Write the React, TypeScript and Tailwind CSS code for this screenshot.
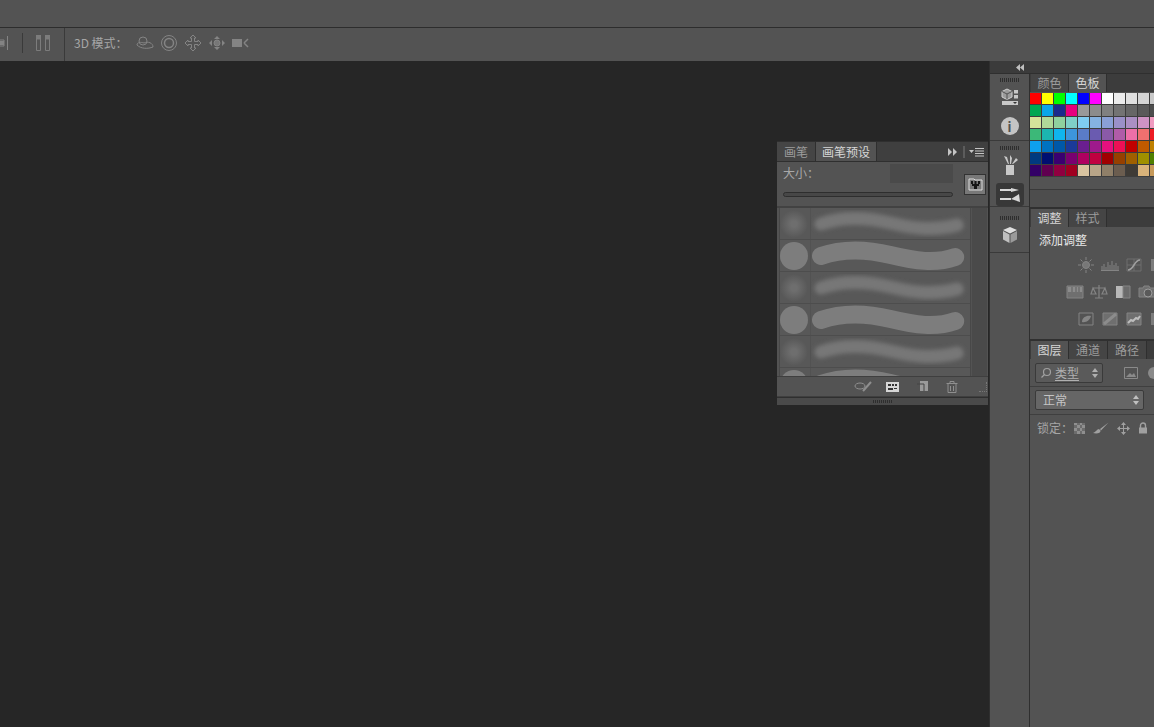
import React from 'react';

const swatchRows = [
  ['#ff0000', '#ffff00', '#00ff00', '#00ffff', '#0000ff', '#ff00ff', '#ffffff', '#ececec', '#e0e0e0', '#d4d4d4', '#c8c8c8'],
  ['#00a651', '#0aa5e8', '#1b2a8c', '#e6007e', '#999999', '#8c8c8c', '#808080', '#737373', '#666666', '#595959', '#4d4d4d'],
  ['#d6e39a', '#b1d998', '#8fd19e', '#7fcfc8', '#7fcdf2', '#85b3e2', '#8aa0d6', '#9a90c8', '#ab8fc4', '#cf93c4', '#f09bc0'],
  ['#3cb878', '#1cb5b0', '#10b5ee', '#3d95dc', '#5a7cc8', '#6a5bb0', '#8a5aa8', '#b05ca8', '#ee6fa8', '#f0706f', '#ed1c24'],
  ['#0ea0ee', '#0072c0', '#0058a8', '#1b3a9a', '#6a1f90', '#9e1a8c', '#e6107e', '#ed1055', '#c00000', '#c05a00', '#c08000'],
  ['#003a80', '#000f70', '#3a0070', '#7a0070', '#b00060', '#c00040', '#a00000', '#964000', '#a06000', '#a09000', '#508000'],
  ['#330066', '#600050', '#900040', '#a00020', '#d9c4a0', '#b8a588', '#8f7f68', '#6b5d4f', '#3f3b36', '#d9b37a', '#c79a5a'],
];

const Gripper: React.FC<{ className?: string }> = ({ className }) => (
  <div className={`flex gap-px ${className ?? ''}`}>
    {Array.from({ length: 10 }).map((_, i) => (
      <div key={i} className="h-[4px] w-px bg-[#2e2e2e]" />
    ))}
  </div>
);

const Icon: React.FC<{ w?: number; h?: number; children: React.ReactNode }> = ({ w = 18, h = 18, children }) => (
  <svg width={w} height={h} viewBox={`0 0 ${w} ${h}`} fill="none" stroke="#848484" strokeWidth="1" className="shrink-0">
    {children}
  </svg>
);

const Tab: React.FC<{ label: string; active?: boolean; w: number }> = ({ label, active, w }) => (
  <div
    style={{ width: w }}
    className={`flex h-full items-center justify-center border-r border-[#2f2f2f] text-[12px] ${
      active ? 'bg-[#535353] text-[#d6d6d6]' : 'bg-[#454545] text-[#9c9c9c]'
    }`}
  >
    {label}
  </div>
);

const SoftBrush = () => (
  <div className="flex h-[32px] border-b border-[#4d4d4d]">
    <div className="flex w-[31px] items-center border-r border-[#525252]">
      <div className="h-[28px] w-[28px] rounded-full bg-[radial-gradient(circle,#6e6e6e_15%,#585858_70%)]" />
    </div>
    <svg width="160" height="31" viewBox="0 0 160 31" fill="none">
      <defs>
        <filter id="soft" x="-10%" y="-80%" width="120%" height="260%">
          <feGaussianBlur stdDeviation="2.2" />
        </filter>
      </defs>
      <path d="M10 16 C 30 9, 55 9, 80 15 S 125 23, 147 17" stroke="#777777" strokeWidth="13" strokeLinecap="round" filter="url(#soft)" />
    </svg>
  </div>
);

const HardBrush = () => (
  <div className="flex h-[32px] border-b border-[#4d4d4d]">
    <div className="flex w-[31px] items-center border-r border-[#525252]">
      <div className="h-[28px] w-[28px] rounded-full bg-[#7d7d7d]" />
    </div>
    <svg width="160" height="31" viewBox="0 0 160 31" fill="none">
      <path d="M10 16 C 30 9, 55 9, 80 15 S 125 24, 145 17" stroke="#7d7d7d" strokeWidth="18" strokeLinecap="round" />
    </svg>
  </div>
);

const BrushPanel = () => (
  <div className="absolute left-[777px] top-[80px] flex h-[264px] w-[211px] flex-col overflow-hidden bg-[#535353]">
    <div className="flex h-[21px] shrink-0 items-end border-y border-[#2f2f2f] bg-[#3f3f3f]">
      <Tab label="画笔" w={39} />
      <Tab label="画笔预设" active w={61} />
      <div className="ml-auto flex items-center gap-[4px] pb-[3px] pr-[3px]">
        <svg width="12" height="10" viewBox="0 0 12 10" fill="#c4c4c4">
          <path d="M1 1 L5 5 L1 9 Z M6 1 L10 5 L6 9 Z" />
        </svg>
        <div className="h-[12px] w-[2px] border-x border-[#5c5c5c]" />
        <svg width="16" height="10" viewBox="0 0 16 10" fill="#c4c4c4">
          <path d="M0 3 H5 L2.5 6 Z M6 1 H15 V2 H6 Z M6 3.5 H15 V4.5 H6 Z M6 6 H15 V7 H6 Z M6 8.5 H15 V9.5 H6 Z" />
        </svg>
      </div>
    </div>
    <div className="flex h-[46px] shrink-0 border-b-2 border-[#424242] pl-[6px] pr-[2px]">
      <div className="flex-1 pr-[11px]">
        <div className="flex h-[22px] items-center justify-between">
          <span className="text-[12px] text-[#a8a8a8]">大小：</span>
          <div className="h-[19px] w-[63px] bg-[#4a4a4a]" />
        </div>
        <div className="mt-[8px] h-[5px] rounded-full border border-[#2e2e2e] bg-[#474747]" />
      </div>
      <div className="mt-[12px] flex h-[21px] w-[22px] items-center justify-center border border-[#333333] bg-[#787878]">
        <svg width="15" height="13" viewBox="0 0 15 13">
          <path d="M1 1 H6 L7 2 H14 V12 H1 Z" fill="none" stroke="#dcdcdc" />
          <path d="M3 3 H5 V6 H3 Z M10 3 H12 V6 H10 Z M6.5 3 H8.5 V6 H6.5 Z M4 6 H11 V8 H4 Z M6 8 H9 V11 H6 Z" fill="#151515" />
        </svg>
      </div>
    </div>
    <div className="flex h-[168px] shrink-0 overflow-hidden">
      <div className="ml-[2px] w-[192px] overflow-hidden border-x border-[#484848] bg-[#585858]">
        <SoftBrush />
        <HardBrush />
        <SoftBrush />
        <HardBrush />
        <SoftBrush />
        <HardBrush />
      </div>
      <div className="ml-[1px] w-[15px] bg-[#4a4a4a]" />
    </div>
    <div className="flex h-[21px] shrink-0 items-center justify-end border-y border-[#3f3f3f] bg-[#535353] pr-[1px]">
      <svg width="19" height="12" viewBox="0 0 19 12" fill="none" stroke="#8f8f8f" className="mr-[13px]">
        <ellipse cx="6" cy="5" rx="5" ry="3" />
        <path d="M9 10 L17 1" strokeWidth="2" />
      </svg>
      <svg width="13" height="10" viewBox="0 0 13 10" className="mr-[18px]">
        <path d="M0 0 H13 V10 H0 Z" fill="#d6d6d6" />
        <path d="M2 2 H5 V4 H2 Z M6 2 H8 V4 H6 Z M9 2 H11 V4 H9 Z M2 6 H7 V8 H2 Z M8 6 H11 V7 H8 Z" fill="#333333" />
      </svg>
      <svg width="11" height="11" viewBox="0 0 11 11" className="mr-[18px]">
        <path d="M3 0 H11 V10 H3 Z" fill="#9a9a9a" />
        <path d="M0 3 H7 V10" fill="none" stroke="#444444" />
      </svg>
      <svg width="12" height="12" viewBox="0 0 12 12" fill="none" stroke="#8f8f8f" className="mr-[21px]">
        <path d="M0.5 2.5 H11.5 M4 2 V0.5 H8 V2 M2 3 V11.5 H10 V3 M4.5 5 V10 M7.5 5 V10" />
      </svg>
      <div className="h-[10px] w-[8px] border-b border-r border-dotted border-[#777777]" />
    </div>
    <div className="flex h-[8px] shrink-0 items-center justify-center border-t border-[#2f2f2f] bg-[#4a4a4a]">
      <Gripper className="[&>div]:h-[3px]" />
    </div>
  </div>
);

const Adjust = {
  sun: (
    <Icon>
      <circle cx="9" cy="9" r="3.5" fill="#777777" />
      <path d="M9 1 V4 M9 14 V17 M1 9 H4 M14 9 H17 M3.5 3.5 L5.5 5.5 M12.5 12.5 L14.5 14.5 M3.5 14.5 L5.5 12.5 M12.5 5.5 L14.5 3.5" />
    </Icon>
  ),
  levels: (
    <Icon>
      <path d="M1 14 V10 M3 14 V8 M5 14 V11 M7 14 V6 M9 14 V9 M11 14 V5 M13 14 V9 M15 14 V7 M17 14 V10 M0 14.5 H18" />
    </Icon>
  ),
  curves: (
    <Icon>
      <path d="M2 3 H16 V15 H2 Z M2 9 H16 M9 3 V15" stroke="#6f6f6f" />
      <path d="M3 14 C 9 14, 9 4, 15 4" strokeWidth="1.5" stroke="#a0a0a0" />
    </Icon>
  ),
  exposure: (
    <Icon>
      <path d="M2 3 H16 V15 H2 Z" fill="#7c7c7c" stroke="none" />
    </Icon>
  ),
  hue: (
    <Icon>
      <path d="M1 3 H17 V15 H1 Z" fill="#6f6f6f" />
      <path d="M2 4 H16 V9 H2 Z" fill="#8c8c8c" stroke="none" />
      <path d="M6 4 V9 M10 4 V9 M13 4 V9" stroke="#5e5e5e" />
    </Icon>
  ),
  scale: (
    <Icon>
      <path d="M9 2 V15 M5 15 H13 M3 5 H15 M3 5 L1 11 H6 Z M15 5 L12 11 H17 Z" strokeWidth="1.2" />
    </Icon>
  ),
  bw: (
    <Icon>
      <path d="M2 3 H9 V15 H2 Z" fill="#b8b8b8" stroke="none" />
      <path d="M9 3 H16 V15 H9 Z" fill="#6b6b6b" />
    </Icon>
  ),
  camera: (
    <Icon>
      <path d="M1 5 H5 L6 3 H11 L12 5 H17 V14 H1 Z" fill="#6f6f6f" />
      <circle cx="10" cy="10" r="4" fill="#5a5a5a" stroke="#9c9c9c" />
    </Icon>
  ),
  invert: (
    <Icon>
      <path d="M2 3 H16 V15 H2 Z" />
      <path d="M5 12 C 5 7, 10 5, 14 6 C 13 10, 9 13, 5 12 Z" fill="#858585" stroke="none" />
    </Icon>
  ),
  poster: (
    <Icon>
      <path d="M2 3 H16 V15 H2 Z" fill="#6f6f6f" />
      <path d="M3 14 L15 4" stroke="#8c8c8c" strokeWidth="3" />
    </Icon>
  ),
  threshold: (
    <Icon>
      <path d="M2 3 H16 V15 H2 Z" fill="#6f6f6f" />
      <path d="M3 13 L6 10 L8 11 L11 8 L13 9 L15 6" stroke="#bdbdbd" strokeWidth="2" />
    </Icon>
  ),
};

const IconRow: React.FC<{ className?: string; children: React.ReactNode }> = ({ className, children }) => (
  <div className={`flex items-center gap-[6px] ${className ?? ''}`}>{children}</div>
);

export default function App() {
  return (
    <div
      className="flex h-[727px] w-[1154px] flex-col overflow-hidden bg-[#262626]"
      style={{ fontFamily: '"Noto Sans CJK SC", "Liberation Sans", sans-serif' }}
    >
      <div className="h-[28px] shrink-0 border-b border-[#2d2d2d] bg-[#535353]" />

      <div className="flex h-[33px] shrink-0 items-center bg-[#535353] pb-[3px] text-[#a6a6a6]">
        <svg width="10" height="18" viewBox="0 0 10 18" fill="none" stroke="#848484" className="shrink-0">
          <path d="M7.5 2 V16 M0 6 H4 V12 H0" />
          <path d="M0 7 H4 V11 H0 Z" fill="#848484" stroke="none" />
        </svg>
        <div className="ml-[12px] h-[20px] w-px bg-[#3a3a3a]" />
        <svg width="16" height="18" viewBox="0 0 16 18" fill="none" stroke="#7c7c7c" className="ml-[12px] shrink-0">
          <path d="M1 1 H6 V5 H1 Z M10 1 H15 V5 H10 Z" fill="#7c7c7c" stroke="none" />
          <path d="M1.5 5 H5.5 V16.5 H1.5 Z M10.5 5 H14.5 V16.5 H10.5 Z" />
        </svg>
        <div className="ml-[13px] -mb-[3px] h-[33px] w-px bg-[#3a3a3a]" />
        <span className="ml-[9px] w-[62px] text-[12px] leading-none">3D 模式：</span>
        <div className="flex gap-[6px]">
          <Icon>
            <circle cx="7" cy="7" r="4" />
            <path d="M1 11 C 1 8, 5 8, 8 9 C 12 7, 17 9, 17 13 C 12 15, 5 15, 1 11 Z" />
          </Icon>
          <Icon>
            <circle cx="9" cy="9" r="7.5" />
            <circle cx="9" cy="9" r="4.5" strokeWidth="1.5" />
          </Icon>
          <Icon>
            <path d="M9 1 L12 4 H10.5 V7.5 H14 V6 L17 9 L14 12 V10.5 H10.5 V14 H12 L9 17 L6 14 H7.5 V10.5 H4 V12 L1 9 L4 6 V7.5 H7.5 V4 H6 Z" />
          </Icon>
          <Icon>
            <path d="M9 2 L12 5 H6 Z M9 16 L12 13 H6 Z M1 9 L4 6 V12 Z M17 9 L14 6 V12 Z" fill="#848484" stroke="none" />
            <circle cx="9" cy="9" r="3" fill="#777777" />
          </Icon>
          <Icon>
            <path d="M0 5 H10 V13 H0 Z" fill="#848484" stroke="none" />
            <path d="M12 9 L16 5 M12 9 L16 13" strokeWidth="1.5" />
          </Icon>
        </div>
      </div>

      <div className="relative flex min-h-0 flex-1">
        <div className="flex-1" />
        <BrushPanel />

        <div className="flex w-[165px] shrink-0 flex-col border-l border-[#2f2f2f] bg-[#535353]">
          <div className="flex h-[13px] shrink-0 items-center justify-end border-b border-[#2f2f2f] bg-[#3b3b3b] pr-[130px]">
            <svg width="8" height="7" viewBox="0 0 8 7" fill="#c0c0c0">
              <path d="M4 0 V7 L0 3.5 Z M8 0 V7 L4 3.5 Z" />
            </svg>
          </div>

          <div className="flex min-h-0 flex-1">
            <div className="w-[40px] shrink-0 border-r border-[#2f2f2f]">
              <div className="flex h-[67px] flex-col items-center border-b border-[#3a3a3a] pt-[4px]">
                <Gripper />
                <svg width="18" height="18" viewBox="0 0 18 18" className="mt-[6px]">
                  <path d="M6 1 L11 3.5 V9 L6 11.5 L1 9 V3.5 Z" fill="#9c9c9c" stroke="#d0d0d0" />
                  <path d="M1 3.5 L6 6 L11 3.5 M6 6 V11.5" fill="none" stroke="#535353" />
                  <path d="M13 2 H17 V5.5 H13 Z M13 7 H17 V10.5 H13 Z M1 13 H17 V17 H1 Z" fill="#c8c8c8" />
                  <path d="M12 14 H16 L14 16 Z" fill="#333333" />
                </svg>
                <div className="mt-[11px] flex h-[18px] w-[18px] items-center justify-center rounded-full bg-[#c4c4c4] text-[13px] font-bold leading-none text-[#535353]">
                  i
                </div>
              </div>
              <div className="flex h-[66px] flex-col items-center border-b border-[#3a3a3a] pt-[5px]">
                <Gripper />
                <svg width="18" height="20" viewBox="0 0 18 20" fill="#c8c8c8" className="mt-[5px]">
                  <path d="M5 10 H13 V20 H5 Z M7 9 L3 1 L6 2 L8 9 Z M9 9 V0 L11 3 L10 9 Z M11 9 L15 3 L17 5 L12 9 Z" />
                </svg>
                <div className="mt-[8px] flex h-[23px] w-[28px] items-center justify-center rounded-[3px] bg-[#383838]">
                  <svg width="22" height="16" viewBox="0 0 22 16" fill="#d8d8d8">
                    <path d="M1 2 H12 V4 H1 Z M12 1 L20 3 L12 5 Z M1 11 H12 V13 H1 Z M12 12 L20 7 L21 15 Z" />
                  </svg>
                </div>
              </div>
              <div className="flex h-[46px] flex-col items-center border-b border-[#3a3a3a] pt-[9px]">
                <Gripper />
                <svg width="18" height="18" viewBox="0 0 18 18" className="mt-[6px]">
                  <path d="M9 1 L16 4 L9 7.5 L2 4 Z" fill="#e0e0e0" />
                  <path d="M2 5 L8.5 8.5 V17 L2 13.5 Z" fill="#c0c0c0" />
                  <path d="M16 5 L9.5 8.5 V17 L16 13.5 Z" fill="#9a9a9a" />
                </svg>
              </div>
            </div>

            <div className="min-w-0 flex-1 overflow-hidden">
              <div className="flex h-[18px] items-end bg-[#3c3c3c] pl-px">
                <Tab label="颜色" w={38} />
                <Tab label="色板" active w={38} />
              </div>
              <div className="h-[98px] border-b border-[#3a3a3a]">
                <div className="flex w-[132px] flex-col pt-px">
                  {swatchRows.map((row, r) => (
                    <div key={r} className="flex">
                      {row.map((c, i) => (
                        <div key={i} style={{ backgroundColor: c }} className="h-[12px] w-[12px] shrink-0 border-b border-r border-[#3d3d3d]" />
                      ))}
                    </div>
                  ))}
                </div>
              </div>
              <div className="h-[19px] border-b-2 border-[#303030] bg-[#4d4d4d]" />

              <div className="flex h-[18px] items-end bg-[#3c3c3c] pl-px">
                <Tab label="调整" active w={38} />
                <Tab label="样式" w={38} />
              </div>
              <div className="h-[114px] border-b-2 border-[#303030]">
                <div className="pl-[9px] pt-[3px] text-[12px] leading-[20px] text-[#e8e8e8]">添加调整</div>
                <IconRow className="ml-[47px] mt-[6px]">
                  {Adjust.sun}
                  {Adjust.levels}
                  {Adjust.curves}
                  {Adjust.exposure}
                </IconRow>
                <IconRow className="ml-[36px] mt-[9px]">
                  {Adjust.hue}
                  {Adjust.scale}
                  {Adjust.bw}
                  {Adjust.camera}
                </IconRow>
                <IconRow className="ml-[47px] mt-[9px]">
                  {Adjust.invert}
                  {Adjust.poster}
                  {Adjust.threshold}
                  {Adjust.exposure}
                </IconRow>
              </div>

              <div className="flex h-[18px] items-end bg-[#3c3c3c] pl-px">
                <Tab label="图层" active w={38} />
                <Tab label="通道" w={39} />
                <Tab label="路径" w={39} />
              </div>
              <div className="flex h-[28px] items-center border-b border-[#3f3f3f] pl-[5px]">
                <div className="flex h-[20px] w-[68px] shrink-0 items-center rounded-[2px] border border-[#3a3a3a] bg-[#5a5a5a] pl-[4px] text-[12px] text-[#b0b0b0]">
                  <svg width="12" height="12" viewBox="0 0 12 12" fill="none" stroke="#a0a0a0" strokeWidth="1.2">
                    <circle cx="7" cy="5" r="3.5" />
                    <path d="M4.5 7.5 L1.5 10.5" />
                  </svg>
                  <span className="ml-[3px] underline underline-offset-2">类型</span>
                  <svg width="6" height="10" viewBox="0 0 6 10" fill="#b0b0b0" className="ml-auto mr-[4px]">
                    <path d="M3 0 L6 4 H0 Z M3 10 L6 6 H0 Z" />
                  </svg>
                </div>
                <svg width="14" height="12" viewBox="0 0 14 12" fill="none" stroke="#8a8a8a" className="ml-[21px] shrink-0">
                  <path d="M0.5 0.5 H13.5 V11.5 H0.5 Z" />
                  <path d="M2 10 L6 6 L8 8 L10 6 L12 10 Z" fill="#8a8a8a" stroke="none" />
                </svg>
                <div className="ml-[10px] h-[12px] w-[12px] shrink-0 rounded-full bg-[#8a8a8a]" />
              </div>
              <div className="flex h-[28px] items-center border-b border-[#3f3f3f] pb-[2px] pl-[5px]">
                <div className="flex h-[20px] w-[109px] shrink-0 items-center rounded-[2px] border border-[#3a3a3a] bg-[#666666] pl-[7px] text-[12px] text-[#c4c4c4]">
                  正常
                  <svg width="6" height="10" viewBox="0 0 6 10" fill="#c0c0c0" className="ml-auto mr-[4px]">
                    <path d="M3 0 L6 4 H0 Z M3 10 L6 6 H0 Z" />
                  </svg>
                </div>
              </div>
              <div className="flex h-[26px] items-center pl-[7px] text-[12px] text-[#a6a6a6]">
                <span className="w-[37px] shrink-0">锁定：</span>
                <div className="flex items-center gap-[8px]">
                  <div className="grid h-[11px] w-[11px] shrink-0 grid-cols-4 bg-[#6c6c6c]">
                    {Array.from({ length: 16 }).map((_, i) => (
                      <div key={i} className={(i + Math.floor(i / 4)) % 2 === 0 ? 'bg-[#8f8f8f]' : ''} />
                    ))}
                  </div>
                  <svg width="16" height="12" viewBox="0 0 16 12" fill="#a0a0a0" className="shrink-0">
                    <path d="M15.5 0.5 L7 7 L8 8.5 Z M6 7 C 4 7, 3 10, 0 11 C 4 12, 8 11, 7.5 8.5 Z" />
                  </svg>
                  <svg width="13" height="13" viewBox="0 0 13 13" fill="#a0a0a0" className="shrink-0">
                    <path d="M6.5 0 L9 3 H7 V6 H10 V4 L13 6.5 L10 9 V7 H7 V10 H9 L6.5 13 L4 10 H6 V7 H3 V9 L0 6.5 L3 4 V6 H6 V3 H4 Z" />
                  </svg>
                  <svg width="10" height="12" viewBox="0 0 10 12" className="shrink-0">
                    <path d="M2.5 6 V3.5 A2.5 2.5 0 0 1 7.5 3.5 V6" fill="none" stroke="#a0a0a0" strokeWidth="1.4" />
                    <path d="M1 5.5 H9 V11.5 H1 Z" fill="#a0a0a0" />
                  </svg>
                </div>
              </div>
            </div>
          </div>
        </div>
      </div>
    </div>
  );
}
